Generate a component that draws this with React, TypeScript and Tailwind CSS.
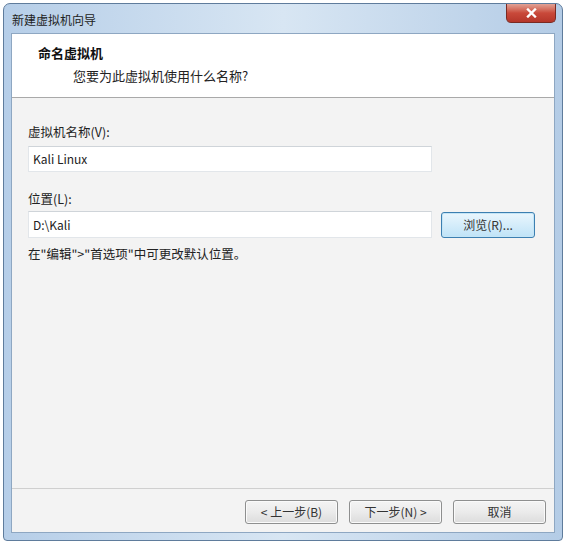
import React from 'react';

const cjk = { fontFamily: '"Noto Sans CJK SC", "Noto Sans", sans-serif' };

function WinButton({ children, focused = false }: { children: React.ReactNode; focused?: boolean }) {
    return (
        <button
            className={
                focused
                    ? 'w-[94px] h-[26px] rounded-[3px] border border-[#3c7fb1] bg-gradient-to-b from-[#eaf6fd] to-[#bfe3f7] text-[12px] text-[#333] shadow-[inset_0_0_0_1px_#c4e5f6]'
                    : 'w-[93px] h-[24px] rounded-[3px] border border-[#8e8f8f] bg-gradient-to-b from-[#f4f4f4] via-[#ebebeb] to-[#dcdcdc] text-[12px] text-[#333] shadow-[inset_0_0_0_1px_#fafafa]'
            }
            style={cjk}
        >
            {children}
        </button>
    );
}

export default function App() {
    return (
        <div className="w-[566px] h-[544px] bg-white p-[3px]" style={cjk}>
            {/* Window frame */}
            <div className="w-[560px] h-[538px] flex flex-col rounded-t-[7px] rounded-b-[4px] border border-[#5f7c9c] bg-gradient-to-r from-[#b6cee8] via-[#d8e6f3] to-[#b4cce6] px-[7px] pb-[7px]">
                {/* Title bar */}
                <div className="h-[29px] flex items-start justify-between">
                    <span className="pt-[7px] pl-[1px] text-[12px] text-[#222]">新建虚拟机向导</span>
                    <div className="w-[50px] h-[19px] -mr-[1px] flex items-center justify-center rounded-b-[5px] border border-t-0 border-[#7a2a22] bg-gradient-to-b from-[#e0a195] via-[#c9493a] to-[#b5362a]">
                        <svg width="11" height="10" viewBox="0 0 11 10">
                            <path d="M2 1.5 L9 8.5 M9 1.5 L2 8.5" stroke="#fff" strokeWidth="2.4" strokeLinecap="square" />
                        </svg>
                    </div>
                </div>

                {/* Client area */}
                <div className="flex-1 flex flex-col border border-[#8ea7c2] bg-[#f3f3f3]">
                    {/* Header */}
                    <div className="h-[64px] bg-white border-b border-[#a9a9a9] pl-[26px] pt-[9px]">
                        <div className="text-[13px] font-bold text-[#111] leading-[20px]">命名虚拟机</div>
                        <div className="pl-[35px] pt-[4px] text-[13px] text-[#222] leading-[18px]">您要为此虚拟机使用什么名称?</div>
                    </div>

                    {/* Body */}
                    <div className="flex-1 pl-[16px] pt-[26px]">
                        <div className="text-[12.5px] text-[#222] leading-[16px]">虚拟机名称(V):</div>
                        <div className="mt-[6px] w-[404px] h-[26px] bg-white border border-[#e2e6ea] border-t-[#cfd4d9] flex items-center pl-[4px] text-[12px] text-[#222]">
                            Kali Linux
                        </div>

                        <div className="mt-[19px] text-[12.5px] text-[#222] leading-[16px]">位置(L):</div>
                        <div className="mt-[4px] flex items-center gap-[9px]">
                            <div className="w-[404px] h-[27px] bg-white border border-[#e2e6ea] border-t-[#cfd4d9] flex items-center pl-[4px] text-[12px] text-[#222]">
                                D:\Kali
                            </div>
                            <WinButton focused>浏览(R)...</WinButton>
                        </div>

                        <div className="mt-[8px] text-[12.5px] text-[#222] leading-[16px]">在"编辑"&gt;"首选项"中可更改默认位置。</div>
                    </div>

                    {/* Footer */}
                    <div className="h-[44px] border-t border-[#cfcfcf] flex justify-end items-start gap-[11px] pt-[11px] pr-[8px]">
                        <WinButton>&lt; 上一步(B)</WinButton>
                        <WinButton>下一步(N) &gt;</WinButton>
                        <WinButton>取消</WinButton>
                    </div>
                </div>
            </div>
        </div>
    );
}
